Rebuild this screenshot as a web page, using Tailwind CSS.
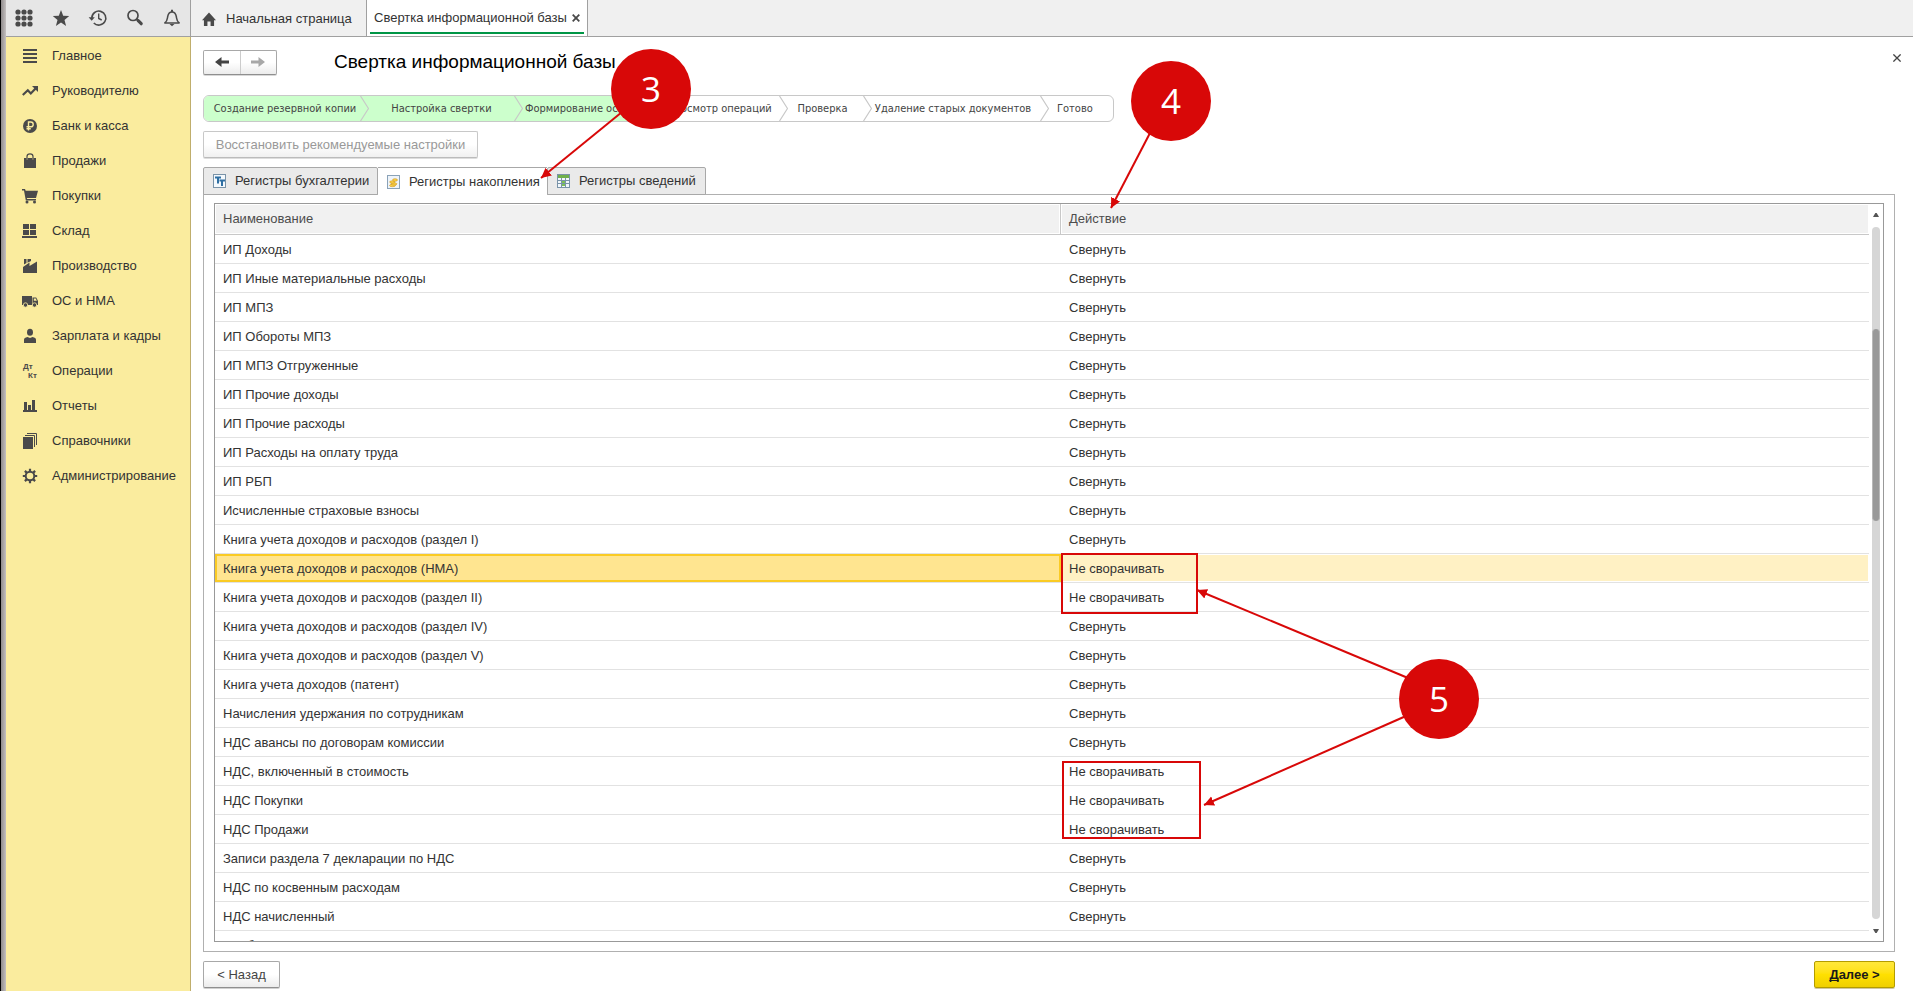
<!DOCTYPE html>
<html lang="ru">
<head>
<meta charset="utf-8">
<title>Свертка информационной базы</title>
<script src="https://cdn.jsdelivr.net/npm/@tailwindcss/browser@4"></script>
</head>
<body class="relative flex h-screen overflow-hidden bg-white font-['Liberation_Sans',Arial,sans-serif] text-[13px] leading-4 text-[#333333]">

<!-- window edge -->
<div class="w-[6px] shrink-0 border-l border-black bg-linear-to-r from-[#8f8b8b] to-[#c4c0c0]"></div>

<div class="flex min-w-0 flex-1 flex-col">
  <header class="flex h-[37px] shrink-0 border-b border-[#a0a0a0] bg-[#f0f0f0]">
    <div class="flex w-[185px] shrink-0 items-center gap-[17px] border-r border-[#a0a0a0] bg-[#e6e6e6] pl-2 text-[#4a4a4a]">
      <button aria-label="Меню" class="size-5"><svg viewBox="0 0 20 20" class="size-5" fill="currentColor"><circle cx="4" cy="4" r="2.6"/><circle cx="10" cy="4" r="2.6"/><circle cx="16" cy="4" r="2.6"/><circle cx="4" cy="10" r="2.6"/><circle cx="10" cy="10" r="2.6"/><circle cx="16" cy="10" r="2.6"/><circle cx="4" cy="16" r="2.6"/><circle cx="10" cy="16" r="2.6"/><circle cx="16" cy="16" r="2.6"/></svg></button>
      <button aria-label="Избранное" class="size-5"><svg viewBox="0 0 20 20" class="size-5" fill="currentColor"><path d="M10 2l2.200 5.800 6 .3-4.700 3.800 1.600 6.100L10 14.600 4.900 18l1.600-6.100L1.800 8.100l6-.3z"/></svg></button>
      <button aria-label="История" class="size-5"><svg viewBox="0 0 20 20" class="size-5" fill="none" stroke="currentColor" stroke-width="1.600"><path d="M3.800 10a7 7 0 1 1 2 5"/><path d="M10.700 5.500v5l3 1.500" stroke-width="1.400"/><path d="M.6 9.300h6.200l-3.100 3.400z" fill="currentColor" stroke="none"/></svg></button>
      <button aria-label="Поиск" class="size-5"><svg viewBox="0 0 20 20" class="size-5" fill="none" stroke="currentColor"><circle cx="8" cy="7.500" r="5" stroke-width="1.700"/><path d="M11.700 11.200l2 2" stroke-width="2"/><path d="M13.200 12.700l3 3" stroke-width="3.200" stroke-linecap="round"/></svg></button>
      <button aria-label="Уведомления" class="size-5"><svg viewBox="0 0 20 20" class="size-5" fill="none" stroke="currentColor" stroke-width="1.500"><path d="M2.800 14.900c2.600-1.900 2.400-3.700 2.900-6.400C6.200 5.600 7.600 4 10 4s3.800 1.600 4.300 4.500c.5 2.700.3 4.500 2.900 6.400z" stroke-linejoin="round"/><path d="M10 4V1.800" stroke-width="2"/><path d="M7.500 16h5L10 18.300z" fill="currentColor" stroke="none"/></svg></button>
    </div>
    <nav class="flex" aria-label="Открытые окна">
      <a href="#" class="flex w-[176px] items-center gap-2.5 border-r border-[#a0a0a0] pt-px pl-[11px]"><svg viewBox="0 0 16 16" class="h-4 w-3.5 text-[#4a4a4a]" fill="currentColor" preserveAspectRatio="none"><path d="M8 1.500l8 7.800h-2.200V15H9.800v-4.500H6.200V15H2.200V9.300H0z"/></svg>Начальная страница</a>
      <div class="flex w-[221px] flex-col border-r border-[#a0a0a0] bg-white px-[3px] pb-0.5">
        <div class="flex flex-1 items-center justify-between border-b-2 border-[#009646] pt-1 pr-1 pl-1"><a href="#">Свертка информационной базы</a><button aria-label="Закрыть вкладку"><svg viewBox="0 0 8 8" class="size-2 text-[#4a4a4a]" stroke="currentColor" stroke-width="1.800"><path d="M.7.7l6.600 6.600M7.300.7L.7 7.300"/></svg></button></div>
      </div>
    </nav>
  </header>

  <div class="flex min-h-0 flex-1">
    <aside class="w-[185px] shrink-0 border-r border-[#c0ae6c] bg-[#faec9e] pt-px">
      <nav aria-label="Разделы">
        <a href="#" class="flex h-[35px] items-center gap-3.5 pl-4"><svg viewBox="0 0 16 16" class="size-4 text-[#4a4a4a]" fill="currentColor"><path d="M1 1h14v2H1zM1 5h14v2H1zM1 9h14v2H1zM1 13h14v2H1z"/></svg>Главное</a>
        <a href="#" class="flex h-[35px] items-center gap-3.5 pl-4"><svg viewBox="0 0 16 16" class="size-4 text-[#4a4a4a]" fill="none" stroke="currentColor" stroke-width="2.200"><path d="M.8 12l5-4.800 3 3.200 5-5.200"/><path d="M10 3h6v6z" fill="currentColor" stroke="none"/></svg>Руководителю</a>
        <a href="#" class="flex h-[35px] items-center gap-3.5 pl-4"><svg viewBox="0 0 16 16" class="size-4"><circle cx="8" cy="8" r="7" fill="#4a4a4a"/><path d="M6.500 12.500v-8.500h2.300a2.300 2.300 0 0 1 0 4.800H4.500M4.500 10.800h4.300" fill="none" stroke="#faec9e" stroke-width="1.400"/></svg>Банк и касса</a>
        <a href="#" class="flex h-[35px] items-center gap-3.5 pl-4"><svg viewBox="0 0 16 16" class="size-4 text-[#4a4a4a]" fill="currentColor"><path d="M2 5h2.500v1.500h1.200V5h4.600v1.500h1.200V5H14v10H2z"/><path d="M5 6.500V3.500Q5 .8 8 .8t3 2.700v3" fill="none" stroke="currentColor" stroke-width="1.200"/></svg>Продажи</a>
        <a href="#" class="flex h-[35px] items-center gap-3.5 pl-4"><svg viewBox="0 0 16 16" class="size-4 text-[#4a4a4a]" fill="currentColor"><path d="M0 1h3l.7 1.800H16l-2 7.200H4.800l.4 1H14v1.500H3.800L2 2.500H0z"/><circle cx="5" cy="14" r="1.500"/><circle cx="12.500" cy="14" r="1.500"/></svg>Покупки</a>
        <a href="#" class="flex h-[35px] items-center gap-3.5 pl-4"><svg viewBox="0 0 16 16" class="size-4 text-[#4a4a4a]" fill="currentColor"><path d="M1 1h6v5H1zM8 1h6v5H8zM1 7h6v5H1zM8 7h6v5H8zM0 13h15v2H0z"/></svg>Склад</a>
        <a href="#" class="flex h-[35px] items-center gap-3.5 pl-4"><svg viewBox="0 0 16 16" class="size-4 text-[#4a4a4a]" fill="currentColor"><path d="M1 15V9l6.500-4.500V8L15 3.500V15zM2 1h2.500v4L2 6.500zM5.500 1H9v2L5.500 4.800z"/></svg>Производство</a>
        <a href="#" class="flex h-[35px] items-center gap-3.5 pl-4"><svg viewBox="0 0 16 16" class="size-4 text-[#4a4a4a]" fill="currentColor"><path d="M0 3h10v9H0z"/><path d="M10.500 4.500h3.700L16 8v4h-5.500z"/><path d="M11.800 5.600h2l1 2.200h-3z" fill="#faec9e"/><circle cx="3.500" cy="12" r="2.200" stroke="#faec9e" stroke-width=".8"/><circle cx="12.500" cy="12" r="2.200" stroke="#faec9e" stroke-width=".8"/></svg>ОС и НМА</a>
        <a href="#" class="flex h-[35px] items-center gap-3.5 pl-4"><svg viewBox="0 0 16 16" class="size-4 text-[#4a4a4a]" fill="currentColor"><ellipse cx="8" cy="4.300" rx="3" ry="3.500"/><path d="M2 15v-3.200Q2 9.600 5.500 9L8 10l2.500-1Q14 9.600 14 11.800V15z"/></svg>Зарплата и кадры</a>
        <a href="#" class="flex h-[35px] items-center gap-3.5 pl-4"><svg viewBox="0 0 16 16" class="size-4 overflow-visible text-[#4a4a4a]" fill="currentColor" font-size="8" font-weight="bold" font-family="Liberation Sans"><text x="1" y="6">Дт</text><text x="6" y="15">Кт</text></svg>Операции</a>
        <a href="#" class="flex h-[35px] items-center gap-3.5 pl-4"><svg viewBox="0 0 16 16" class="size-4 text-[#4a4a4a]" fill="currentColor"><path d="M2 4h3v9H2zM6 7h3v6H6zM10 2h3v11h-3zM1 12h14v2H1z"/></svg>Отчеты</a>
        <a href="#" class="flex h-[35px] items-center gap-3.5 pl-4"><svg viewBox="0 0 16 16" class="size-4 text-[#4a4a4a]" fill="currentColor"><path d="M1 4h10v12H1z"/><path d="M3 2.500h9.500V14M5 .5h9.500V12" fill="none" stroke="currentColor"/></svg>Справочники</a>
        <a href="#" class="flex h-[35px] items-center gap-3.5 pl-4"><svg viewBox="0 0 16 16" class="size-4 text-[#4a4a4a]" fill="none" stroke="currentColor"><circle cx="8" cy="8" r="4.300" stroke-width="2"/><path d="M8 .8v2.700M8 12.500v2.700M.8 8h2.700M12.500 8h2.700M2.900 2.900l2 2M11.100 11.100l2 2M13.100 2.900l-2 2M4.900 11.100l-2 2" stroke-width="2.200"/></svg>Администрирование</a>
      </nav>
    </aside>

    <main class="flex min-w-0 flex-1 flex-col pt-3 pr-[18px] pb-[3px] pl-3">
      <div class="flex h-[26px] items-center">
        <div class="flex h-[25px] w-[74px] rounded-xs border border-[#a8a8a8] border-b-[#8f8f8f] bg-linear-to-b from-white from-50% to-[#ececec] shadow-[0_1px_0_#d8d8d8]">
          <button aria-label="Назад" class="flex flex-1 items-center justify-center border-r border-[#cccccc] text-[#444444]"><svg viewBox="0 0 14 12" class="h-3 w-3.5" fill="currentColor"><path d="M0 6l6.500-5v3.500H14v3H6.500V11z"/></svg></button>
          <button aria-label="Вперед" class="flex flex-1 items-center justify-center text-[#a8a8a8]"><svg viewBox="0 0 14 12" class="h-3 w-3.5" fill="currentColor"><path d="M14 6L7.500 1v3.500H0v3h7.500V11z"/></svg></button>
        </div>
        <h1 class="ml-[57px] flex-1 text-[19px] leading-6 text-black">Свертка информационной базы</h1>
        <button aria-label="Закрыть" class="-mr-1.5 mb-2"><svg viewBox="0 0 8 8" class="size-2 text-[#444444]" stroke="currentColor" stroke-width="1.300"><path d="M.4.4l7.200 7.200M7.600.4L.4 7.600"/></svg></button>
      </div>

      <ol class="mt-5 flex h-[27px] w-[911px] shrink-0 overflow-hidden rounded-md border border-[#c8c8c8] font-['DejaVu_Sans_Condensed','DejaVu_Sans',sans-serif] text-[11px] whitespace-nowrap text-[#444444]">
        <li class="flex w-[165px] items-center bg-[#ccffcc] pl-1.5"><span class="flex-1 text-center">Создание резервной копии</span><svg viewBox="0 0 9 25" class="h-[25px] w-[9px]" fill="none" stroke="#c8c8c8" stroke-width="1.200"><path d="M.5 0L8.500 12.500.5 25"/></svg></li>
        <li class="flex w-[154px] items-center bg-[#ccffcc]"><span class="flex-1 text-center">Настройка свертки</span><svg viewBox="0 0 9 25" class="h-[25px] w-[9px]" fill="none" stroke="#c8c8c8" stroke-width="1.200"><path d="M.5 0L8.500 12.500.5 25"/></svg></li>
        <li class="flex w-[137px] items-center bg-[#ccffcc] pl-0.5"><span class="flex-1">Формирование остатков</span><svg viewBox="0 0 9 25" class="h-[25px] w-[9px] bg-white" stroke="#c8c8c8" stroke-width="1.200"><path d="M-1 0H.5L8.500 12.500.5 25H-1z" fill="#ccffcc"/></svg></li>
        <li class="flex w-[128px] items-center"><span class="flex-1 text-center">Просмотр операций</span><svg viewBox="0 0 9 25" class="h-[25px] w-[9px]" fill="none" stroke="#c8c8c8" stroke-width="1.200"><path d="M.5 0L8.500 12.500.5 25"/></svg></li>
        <li class="flex w-[84px] items-center"><span class="flex-1 pr-1.5 text-center">Проверка</span><svg viewBox="0 0 9 25" class="h-[25px] w-[9px]" fill="none" stroke="#c8c8c8" stroke-width="1.200"><path d="M.5 0L8.500 12.500.5 25"/></svg></li>
        <li class="flex w-[177px] items-center"><span class="flex-1 pr-1.5 text-center">Удаление старых документов</span><svg viewBox="0 0 9 25" class="h-[25px] w-[9px]" fill="none" stroke="#c8c8c8" stroke-width="1.200"><path d="M.5 0L8.500 12.500.5 25"/></svg></li>
        <li class="flex flex-1 items-center pl-2">Готово</li>
      </ol>

      <button disabled class="mt-[9px] h-[27px] w-[275px] shrink-0 rounded-xs border border-[#c8c8c8] border-b-[#bbbbbb] bg-linear-to-b from-white from-50% to-[#f0f0f0] text-[#999999] shadow-[0_1px_0_#dddddd]">Восстановить рекомендуемые настройки</button>

      <div role="tablist" class="relative z-10 mt-[9px] -mb-px flex h-7 shrink-0">
        <button role="tab" class="flex w-[175px] items-center gap-[9px] rounded-t-xs border border-[#a8a8a8] bg-[#eaeaea] pl-[9px]"><svg viewBox="0 0 13 14" class="h-3.5 w-[13px]"><rect x=".5" y=".5" width="12" height="13" fill="#f4f9fd" stroke="#7a93a8"/><path d="M2 2.500h6v2H6v5H4v-5H2zM6.500 5.500H12v2h-2v4.500H8V7.500H6.500z" fill="#2e6fa3"/></svg>Регистры бухгалтерии</button>
        <button role="tab" aria-selected="true" class="flex w-[169px] items-center gap-[9px] border-t border-[#a8a8a8] bg-white pl-[9px]"><svg viewBox="0 0 13 14" class="h-3.5 w-[13px]"><rect x=".5" y=".5" width="12" height="13" fill="#eef4fa" stroke="#8aa2b8"/><g fill="#f9d24a" stroke="#c98a12" stroke-width=".5"><ellipse cx="5.500" cy="10.500" rx="3" ry="1.200"/><ellipse cx="7" cy="8.900" rx="3" ry="1.200"/><ellipse cx="5.300" cy="7" rx="2.700" ry="1.200"/><ellipse cx="8" cy="5" rx="2.500" ry="1.300"/></g></svg>Регистры накопления</button>
        <button role="tab" class="flex w-[159px] items-center gap-[9px] rounded-t-xs border border-[#a8a8a8] bg-[#eaeaea] pl-[9px]"><svg viewBox="0 0 13 14" class="h-3.5 w-[13px]"><rect x=".5" y=".5" width="12" height="13" fill="#f2f7fb" stroke="#7a93a8"/><path d="M1 1h11v3H1z" fill="#6fb04a"/><path d="M5 7h3v2H5zM5 10h3v2H5z" fill="#7cbf55"/><path d="M4.500 4v9M8.500 4v9M1 6.500h11M1 9.500h11" stroke="#7a93a8"/></svg>Регистры сведений</button>
      </div>

      <section class="flex min-h-0 flex-1 border border-[#b0b0b0] px-2.5 pt-2 pb-[9px]">
        <div class="flex min-w-0 flex-1 overflow-hidden border border-[#999999]">
          <div class="min-w-0 flex-1 overflow-hidden">
            <table class="w-full table-fixed border-separate border-spacing-0 text-left">
              <thead><tr class="text-[#4d4d4d]"><th class="h-[31px] w-[846px] border-r border-b border-[#c8c8c8] bg-[#f1f1f1] bg-clip-padding p-0 pl-2 font-normal shadow-[inset_0_0_0_1px_#ffffff]">Наименование</th><th class="border-b border-[#c8c8c8] bg-[#f1f1f1] p-0 pl-2 font-normal shadow-[inset_0_0_0_1px_#ffffff]">Действие</th></tr></thead>
              <tbody id="rows"></tbody>
            </table>
          </div>
          <div class="flex w-3.5 shrink-0 flex-col items-center pt-[9px] pb-2" aria-hidden="true">
            <svg viewBox="0 0 6 4" class="h-1 w-1.5" fill="#555555"><path d="M2.300 0h1.400L6 4H0z"/></svg>
            <div class="mt-2.5 flex w-2 flex-1 flex-col rounded-full bg-[#d6d6d6]">
              <div class="mt-[102px] h-48 rounded-full border-x border-[#b8b8b8] bg-[#999999]"></div>
            </div>
            <svg viewBox="0 0 6 4" class="mt-2.5 h-1 w-1.5" fill="#555555"><path d="M0 0h6L3.700 4H2.300z"/></svg>
          </div>
        </div>
      </section>

      <div class="mt-[9px] flex h-[27px] shrink-0 justify-between">
        <button class="w-[77px] rounded-xs border border-[#a8a8a8] border-b-[#8f8f8f] bg-linear-to-b from-white from-50% to-[#ececec] text-[#444444] shadow-[0_1px_0_#d0d0d0]">&lt; Назад</button>
        <button class="w-[81px] rounded-xs border border-[#b39c00] bg-linear-to-b from-[#ffe83a] via-[#ffe000] to-[#efcf00] font-bold text-[#1a1a1a] shadow-[0_1px_0_#d0c8a0]"><span class="underline [text-decoration-skip-ink:none]">Д</span>алее &gt;</button>
      </div>
    </main>
  </div>
</div>

<!-- callouts laid over the window -->
<svg class="pointer-events-none absolute top-0 left-0 z-20 h-[991px] w-[1913px]" viewBox="0 0 1913 991" fill="none" stroke="#d80808" stroke-width="2" font-family="Open Sans, Noto Sans, sans-serif">
  <defs><marker id="tip" markerUnits="userSpaceOnUse" markerWidth="12" markerHeight="12" refX="10" refY="5" orient="auto"><path d="M0 0l10 5-10 5z" fill="#d80808" stroke="none"/></marker></defs>
  <rect x="1062" y="554" width="135" height="59"/>
  <rect x="1063" y="762" width="137" height="76"/>
  <g marker-end="url(#tip)">
    <path d="M622 112L541 178" marker-end="url(#tip)"/><path d="M1150 133L1111 208" marker-end="url(#tip)"/><path d="M1408 678L1197 590" marker-end="url(#tip)"/><path d="M1406 716L1204 805" marker-end="url(#tip)"/>
  </g>
  <g fill="#d80808" stroke="none"><circle cx="651" cy="89" r="40"/><circle cx="1171" cy="101" r="40"/><circle cx="1439" cy="699" r="40"/></g>
  <g fill="#ffffff" stroke="none" font-size="35" font-weight="500" text-anchor="middle"><text x="651" y="102">3</text><text x="1171" y="114">4</text><text x="1439" y="712">5</text></g>
</svg>

<script>
const names = ["ИП Доходы","ИП Иные материальные расходы","ИП МПЗ","ИП Обороты МПЗ","ИП МПЗ Отгруженные","ИП Прочие доходы","ИП Прочие расходы","ИП Расходы на оплату труда","ИП РБП","Исчисленные страховые взносы","Книга учета доходов и расходов (раздел I)","Книга учета доходов и расходов (НМА)","Книга учета доходов и расходов (раздел II)","Книга учета доходов и расходов (раздел IV)","Книга учета доходов и расходов (раздел V)","Книга учета доходов (патент)","Начисления удержания по сотрудникам","НДС авансы по договорам комиссии","НДС, включенный в стоимость","НДС Покупки","НДС Продажи","Записи раздела 7 декларации по НДС","НДС по косвенным расходам","НДС начисленный","Необлагаемые НДС"];
const kept = [11, 12, 18, 19, 20];
const selected = 11;
document.getElementById('rows').innerHTML = names.map((name, i) => {
  const action = kept.includes(i) ? 'Не сворачивать' : 'Свернуть';
  return i === selected
    ? `<tr><td class="h-[29px] border-b border-[#e2e2e2] bg-[#ffe590] bg-clip-padding p-0 pt-0.5 pl-2 shadow-[inset_0_0_0_2px_#facb24]">${name}</td><td class="border-b border-[#e2e2e2] bg-[#fff1c4] p-0 pt-0.5 pl-2 shadow-[inset_0_0_0_1px_#ffffff]">${action}</td></tr>`
    : `<tr><td class="h-[29px] border-b border-[#e2e2e2] p-0 pt-0.5 pl-2">${name}</td><td class="border-b border-[#e2e2e2] p-0 pt-0.5 pl-2">${action}</td></tr>`;
}).join('');
</script>
</body>
</html>
